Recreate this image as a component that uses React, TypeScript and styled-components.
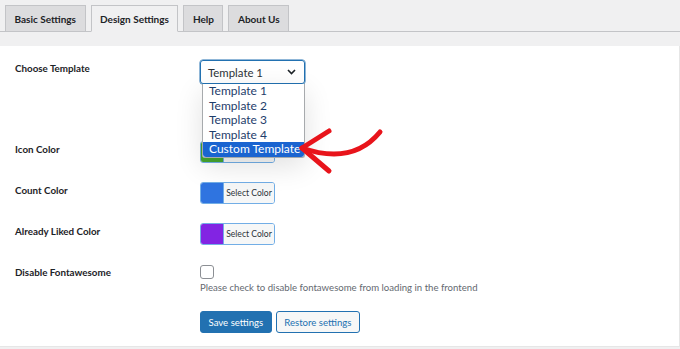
import React from 'react';
import styled, { createGlobalStyle } from 'styled-components';

const GlobalStyle = createGlobalStyle`
  body {
    margin: 0;
    background: #f0f0f1;
    font-family: Lato, "Open Sans", sans-serif;
    color: #1d2327;
  }
`;

const Page = styled.div`
  width: 680px;
  height: 349px;
  overflow: hidden;
  padding-top: 5px;
  box-sizing: border-box;
`;

const TabBar = styled.div`
  display: flex;
  gap: 5px;
  padding-left: 5px;
  height: 26px;
  border-bottom: 1px solid #c3c4c7;
`;

const Tab = styled.div<{ active?: boolean }>`
  display: flex;
  align-items: center;
  padding: 0 8.5px;
  font-size: 10px;
  font-weight: 700;
  color: #1d2327;
  background: ${p => (p.active ? '#f0f0f1' : '#dcdcde')};
  border: 1px solid #c3c4c7;
  border-bottom-color: ${p => (p.active ? '#f0f0f1' : '#c3c4c7')};
  margin-bottom: -1px;
  box-sizing: border-box;
`;

const Panel = styled.div`
  position: relative;
  margin-top: 14px;
  height: 301px;
  background: #fff;
  border-right: 1px solid #e6e6e6;
  border-bottom: 1px solid #e6e6e6;
  padding-top: 14px;
  box-sizing: border-box;
`;

const Row = styled.div<{ h: number }>`
  display: flex;
  height: ${p => p.h}px;
`;

const Label = styled.div`
  width: 185px;
  padding-left: 15px;
  padding-top: 2px;
  font-size: 9.8px;
  font-weight: 700;
  color: #1d2327;
`;

const Field = styled.div`
  position: relative;
  display: flex;
  flex-direction: column;
`;

const Select = styled.div`
  width: 105px;
  height: 24px;
  box-sizing: border-box;
  border: 1px solid #2271b1;
  border-radius: 3px;
  box-shadow: 0 0 0 0.5px #2271b1;
  display: flex;
  align-items: center;
  justify-content: space-between;
  padding: 0 8px 0 7px;
  font-size: 11.4px;
  color: #2c3338;
`;

const OptionList = styled.div`
  position: absolute;
  top: 24px;
  left: 2px;
  width: 103px;
  background: #fff;
  border: 1px solid #a7aaad;
  border-top: none;
  border-radius: 0 0 3px 3px;
  box-shadow: 0 8px 28px rgba(0, 0, 0, 0.12);
  z-index: 2;
  box-sizing: border-box;
`;

const Option = styled.div<{ selected?: boolean }>`
  height: 14.6px;
  line-height: 14.6px;
  padding-left: 6px;
  font-size: 12px;
  color: ${p => (p.selected ? '#fff' : '#1e3d6b')};
  background: ${p => (p.selected ? '#1a64d0' : 'transparent')};
  border-radius: ${p => (p.selected ? '0 0 3px 3px' : '0')};
  white-space: nowrap;
`;

const ColorButton = styled.div`
  display: flex;
  width: 75px;
  height: 22px;
  box-sizing: border-box;
  border: 1px solid #72aee6;
  border-radius: 3px;
  overflow: hidden;
`;

const Swatch = styled.div<{ color: string }>`
  width: 22px;
  flex-shrink: 0;
  background: ${p => p.color};
  border-right: 1px solid #72aee6;
`;

const SwatchLabel = styled.div`
  flex: 1;
  display: flex;
  align-items: center;
  justify-content: center;
  background: #f6f7f7;
  font-size: 8.6px;
  color: #2c3338;
  white-space: nowrap;
`;

const Checkbox = styled.div`
  width: 12px;
  height: 12px;
  margin-top: 1px;
  border: 1px solid #8c8f94;
  border-radius: 3px;
`;

const Description = styled.div`
  margin-top: 3px;
  font-size: 9.6px;
  color: #646970;
  white-space: nowrap;
`;

const Actions = styled.div`
  display: flex;
  gap: 4px;
  margin-left: 200px;
`;

const Button = styled.div<{ primary?: boolean }>`
  height: 22px;
  padding: 0 7.5px;
  display: flex;
  align-items: center;
  box-sizing: border-box;
  border: 1px solid #2271b1;
  border-radius: 3px;
  font-size: 9.6px;
  background: ${p => (p.primary ? '#2271b1' : '#f6f7f7')};
  color: ${p => (p.primary ? '#fff' : '#2271b1')};
`;

const Arrow = styled.svg`
  position: absolute;
  left: 295px;
  top: 80px;
  z-index: 3;
`;

const Chevron = () => (
  <svg width="9" height="6" viewBox="0 0 9 6">
    <path d="M1 1l3.5 3.5L8 1" fill="none" stroke="#1d2327" strokeWidth="1.6" />
  </svg>
);

const ColorPicker: React.FC<{ color: string }> = ({ color }) => (
  <ColorButton>
    <Swatch color={color} />
    <SwatchLabel>Select Color</SwatchLabel>
  </ColorButton>
);

const templates = ['Template 1', 'Template 2', 'Template 3', 'Template 4', 'Custom Template'];

export default function App() {
  return (
    <Page>
      <GlobalStyle />
      <TabBar>
        <Tab>Basic Settings</Tab>
        <Tab active>Design Settings</Tab>
        <Tab>Help</Tab>
        <Tab>About Us</Tab>
      </TabBar>
      <Panel>
        <Row h={81}>
          <Label>Choose Template</Label>
          <Field>
            <Select>
              Template 1
              <Chevron />
            </Select>
            <OptionList>
              {templates.map((t, i) => (
                <Option key={t} selected={i === templates.length - 1}>{t}</Option>
              ))}
            </OptionList>
          </Field>
        </Row>
        <Row h={41}>
          <Label>Icon Color</Label>
          <Field>
            <ColorPicker color="#46a52f" />
          </Field>
        </Row>
        <Row h={41}>
          <Label>Count Color</Label>
          <Field>
            <ColorPicker color="#2f74e0" />
          </Field>
        </Row>
        <Row h={41}>
          <Label>Already Liked Color</Label>
          <Field>
            <ColorPicker color="#8224e3" />
          </Field>
        </Row>
        <Row h={47}>
          <Label>Disable Fontawesome</Label>
          <Field>
            <Checkbox />
            <Description>Please check to disable fontawesome from loading in the frontend</Description>
          </Field>
        </Row>
        <Actions>
          <Button primary>Save settings</Button>
          <Button>Restore settings</Button>
        </Actions>
        <Arrow width="95" height="60" viewBox="0 0 95 60">
          <path
            d="M7 22 C 30 30, 62 34, 85 6"
            fill="none"
            stroke="#e8141b"
            strokeWidth="5"
            strokeLinecap="round"
          />
          <path
            d="M34 5 L 7 22 L 34 45"
            fill="none"
            stroke="#e8141b"
            strokeWidth="5"
            strokeLinecap="round"
            strokeLinejoin="round"
          />
        </Arrow>
      </Panel>
    </Page>
  );
}
